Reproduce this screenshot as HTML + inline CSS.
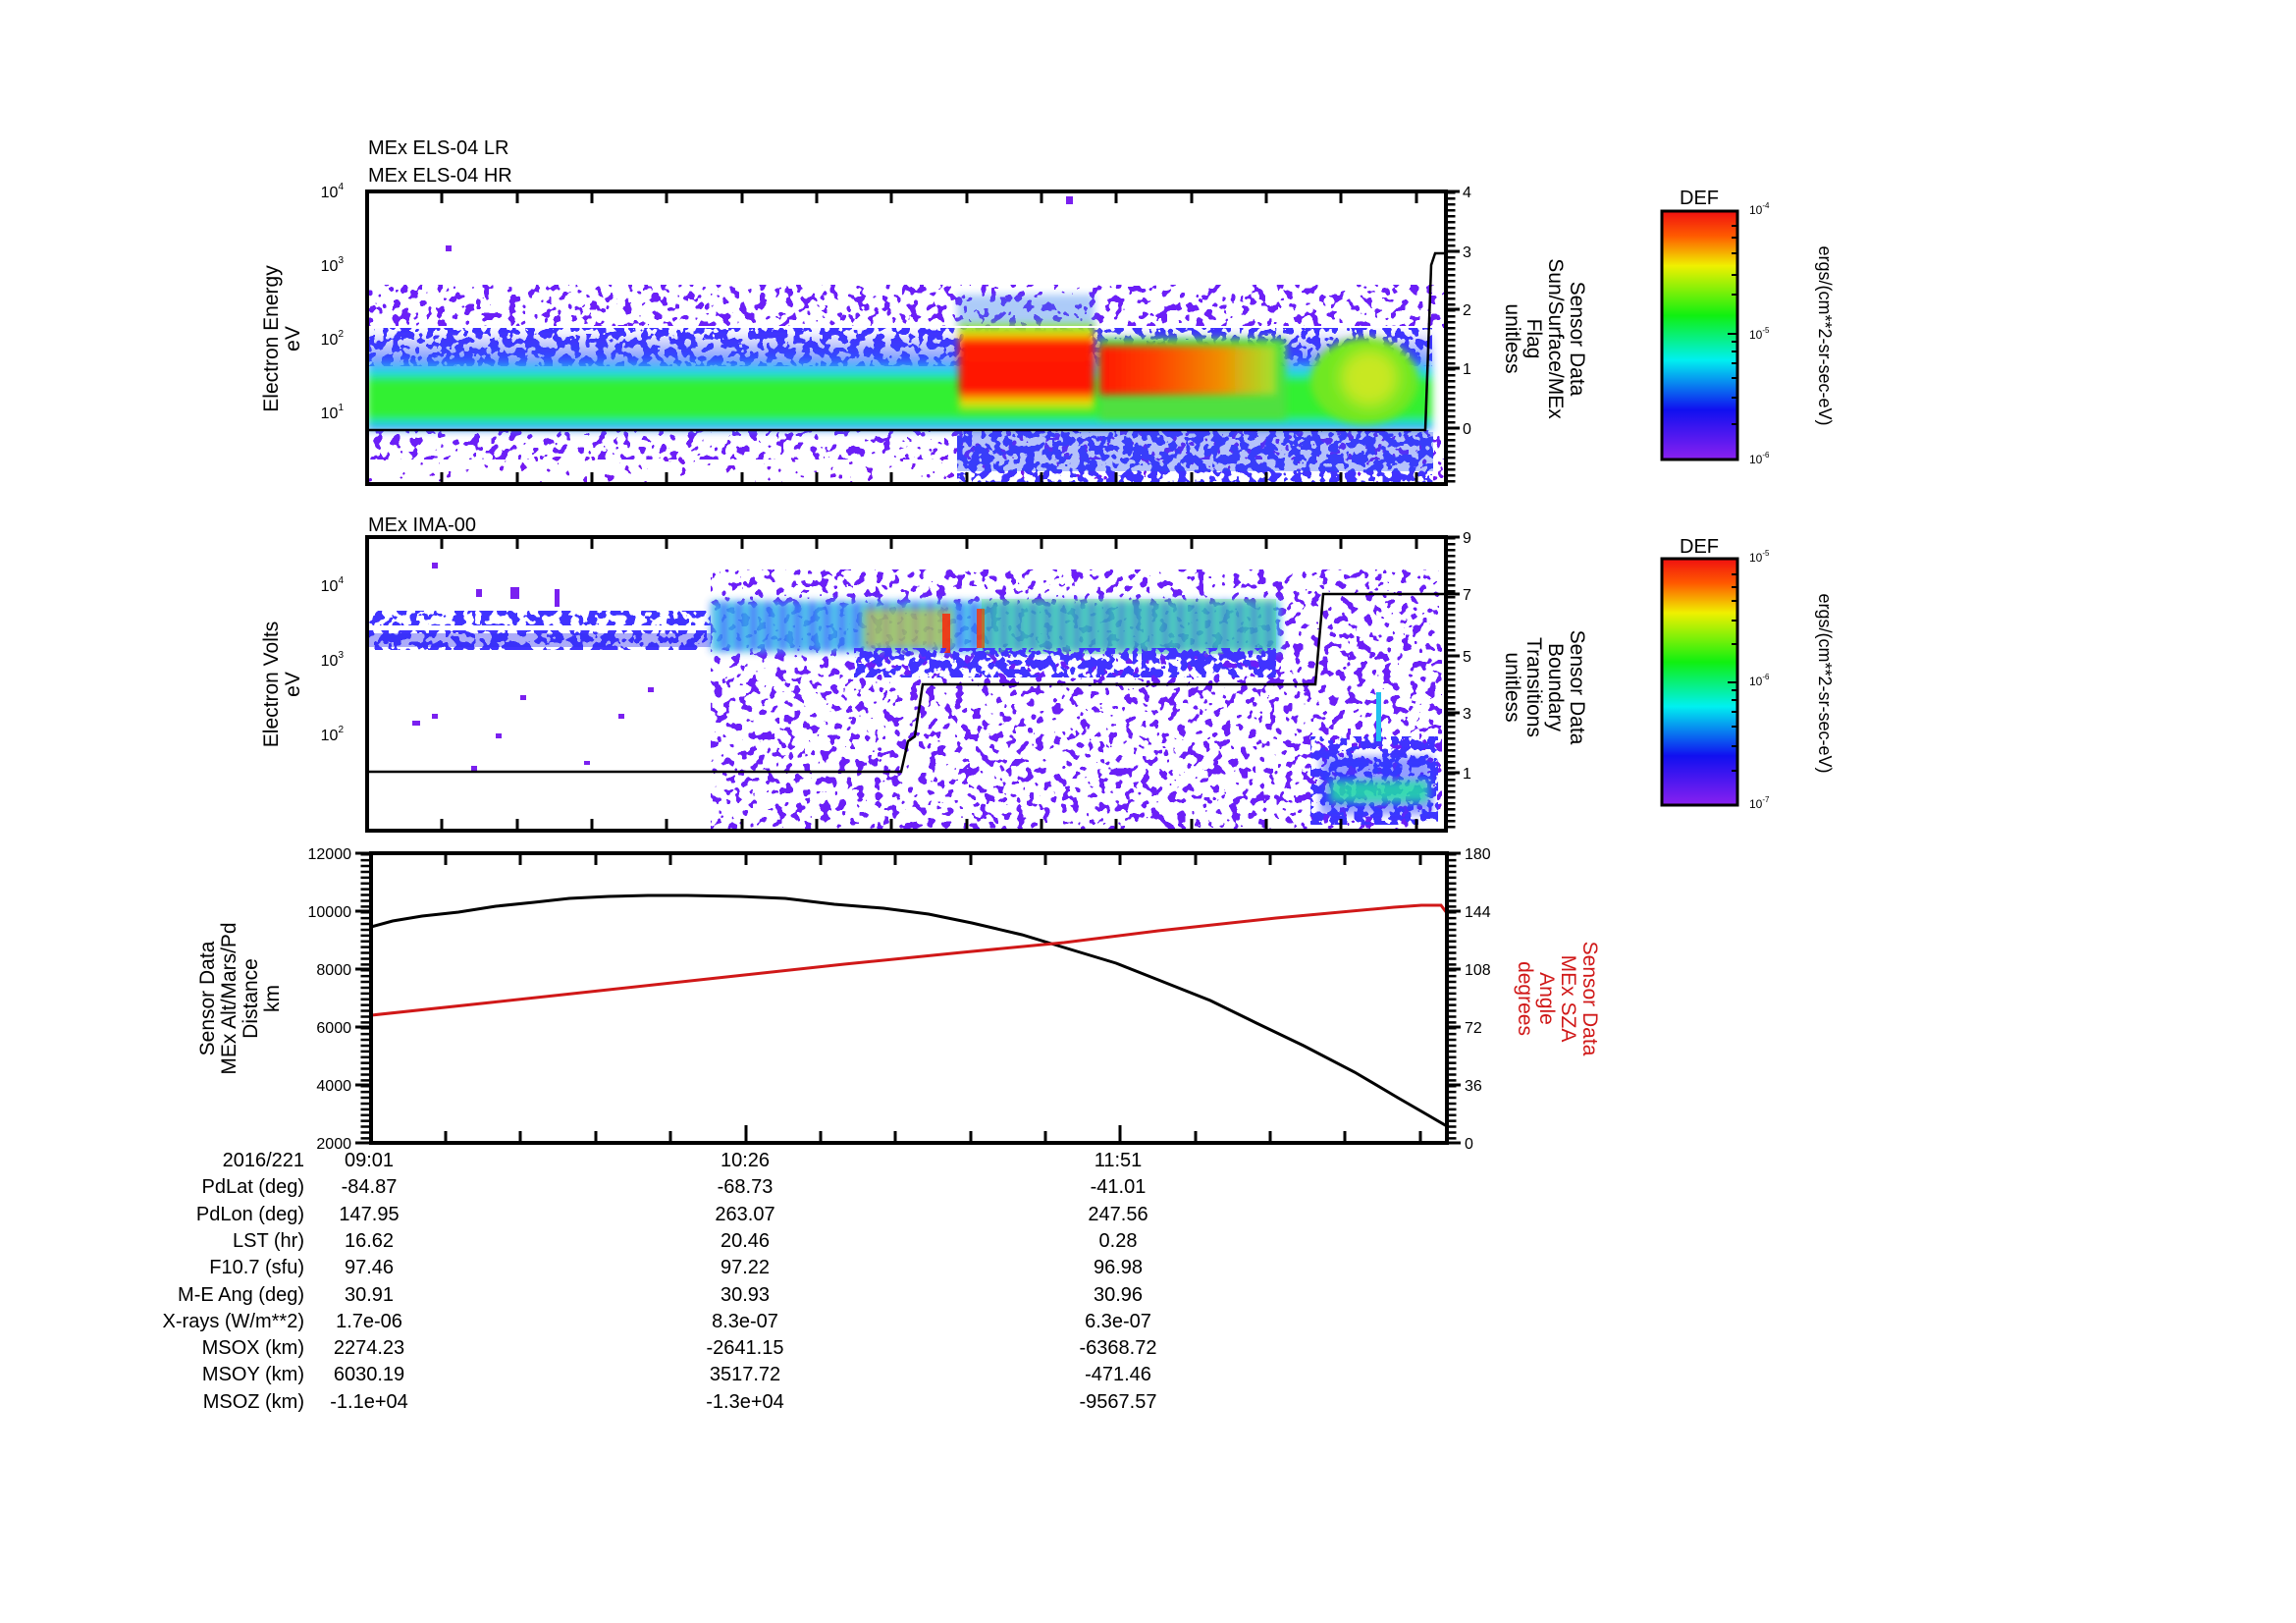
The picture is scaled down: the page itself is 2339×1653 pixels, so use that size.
<!DOCTYPE html>
<html><head><meta charset="utf-8"><style>
html,body{margin:0;padding:0;background:#fff;}
svg{display:block;font-family:"Liberation Sans",Arial,sans-serif;}
</style></head><body>
<svg width="2339" height="1653" viewBox="0 0 2339 1653" xmlns="http://www.w3.org/2000/svg">
<defs>
<filter id="spS" x="0" y="0" width="1" height="1" color-interpolation-filters="sRGB">
 <feTurbulence type="fractalNoise" baseFrequency="0.11 0.11" numOctaves="2" seed="4"/>
 <feColorMatrix type="matrix" values="0 0 0 0 0.45 0 0 0 0 0.1 0 0 0 0 0.95 1 0 0 0 0"/>
 <feComponentTransfer><feFuncA type="discrete" tableValues="0 0 0 0 0 0 0 1 1 1"/></feComponentTransfer>
</filter>
<filter id="spM" x="0" y="0" width="1" height="1" color-interpolation-filters="sRGB">
 <feTurbulence type="fractalNoise" baseFrequency="0.11 0.11" numOctaves="2" seed="9"/>
 <feColorMatrix type="matrix" values="0 0 0 0 0.42 0 0 0 0 0.12 0 0 0 0 0.97 1 0 0 0 0"/>
 <feComponentTransfer><feFuncA type="discrete" tableValues="0 0 0 0 0 0 1 1 1 1"/></feComponentTransfer>
</filter>
<filter id="spD" x="0" y="0" width="1" height="1" color-interpolation-filters="sRGB">
 <feTurbulence type="fractalNoise" baseFrequency="0.11 0.11" numOctaves="2" seed="13"/>
 <feColorMatrix type="matrix" values="0 0 0 0 0.25 0 0 0 0 0.2 0 0 0 0 1 1 0 0 0 0"/>
 <feComponentTransfer><feFuncA type="discrete" tableValues="0 0 0 0 0 1 1 1 1 1"/></feComponentTransfer>
</filter>
<filter id="bl" x="-10%" y="-20%" width="120%" height="140%"><feGaussianBlur stdDeviation="4"/></filter>
<filter id="bl2" x="-20%" y="-20%" width="140%" height="140%"><feGaussianBlur stdDeviation="8"/></filter>
<linearGradient id="band1" x1="0" y1="0" x2="0" y2="1">
 <stop offset="0" stop-color="#3030f0" stop-opacity="0"/><stop offset="0.3" stop-color="#2a60ff" stop-opacity="0.6"/>
 <stop offset="0.42" stop-color="#20d8f0"/><stop offset="0.52" stop-color="#30f030"/>
 <stop offset="0.85" stop-color="#30f030"/><stop offset="0.95" stop-color="#20d8f0"/>
 <stop offset="1" stop-color="#2040ff"/>
</linearGradient>
<linearGradient id="redv" x1="0" y1="0" x2="0" y2="1">
 <stop offset="0" stop-color="#40e040"/><stop offset="0.12" stop-color="#f0e000"/>
 <stop offset="0.2" stop-color="#ff2000"/><stop offset="0.75" stop-color="#ff1000"/>
 <stop offset="0.88" stop-color="#f0e000"/><stop offset="1" stop-color="#50e830"/>
</linearGradient>
<linearGradient id="orh" x1="0" y1="0" x2="1" y2="0">
 <stop offset="0" stop-color="#ff1800"/><stop offset="0.3" stop-color="#ff4000"/>
 <stop offset="0.7" stop-color="#f09000"/><stop offset="1" stop-color="#d8e020" stop-opacity="0.6"/>
</linearGradient>
<linearGradient id="cb" x1="0" y1="0" x2="0" y2="1">
 <stop offset="0" stop-color="#f01010"/><stop offset="0.1" stop-color="#ff5a00"/>
 <stop offset="0.22" stop-color="#f0f000"/><stop offset="0.42" stop-color="#10f010"/>
 <stop offset="0.6" stop-color="#00f0f0"/><stop offset="0.8" stop-color="#1010f0"/>
 <stop offset="1" stop-color="#8a20f0"/>
</linearGradient>
<pattern id="stripe" x="724" y="0" width="15" height="10" patternUnits="userSpaceOnUse">
 <rect width="15" height="10" fill="#3050ff"/><rect x="3" width="6" height="10" fill="#30d8d8"/>
</pattern>
<clipPath id="c1"><rect x="374" y="195" width="1099" height="298"/></clipPath>
<clipPath id="c2"><rect x="374" y="547" width="1099" height="299"/></clipPath>
<clipPath id="cl1"><rect x="350" y="195" width="30" height="299"/></clipPath>
<clipPath id="cl2"><rect x="350" y="547" width="30" height="300"/></clipPath>
<g id="dec"><path d="M0 0h-12 M0 -17h-7 M0 -27h-7 M0 -34h-7 M0 -39.5h-7 M0 -44h-7 M0 -48h-7 M0 -51h-7 M0 -54h-7" stroke="#000" stroke-width="3"/></g>
</defs>
<rect width="2339" height="1653" fill="#fff"/>

<g font-size="20" fill="#000">
<text x="375" y="157">MEx ELS-04 LR</text>
<text x="375" y="185">MEx ELS-04 HR</text>
<text x="375" y="541">MEx IMA-00</text>
</g>

<!-- PANEL 1 -->
<g clip-path="url(#c1)">
 <rect x="374" y="290" width="1099" height="44" filter="url(#spM)"/>
 <rect x="374" y="438" width="1099" height="30" filter="url(#spM)"/>
 <rect x="374" y="465" width="1099" height="28" filter="url(#spS)"/>
 <rect x="374" y="333" width="1085" height="40" filter="url(#spD)"/>
 <rect x="374" y="336" width="1085" height="102" fill="url(#band1)" filter="url(#bl)"/>
 <rect x="975" y="438" width="485" height="55" filter="url(#spD)"/>
 <rect x="975" y="440" width="485" height="40" fill="#2a50f0" opacity="0.35"/>
 <rect x="975" y="300" width="140" height="33" fill="#3080f0" opacity="0.4" filter="url(#bl)"/>
 <rect x="977" y="330" width="138" height="90" fill="url(#redv)" filter="url(#bl)"/>
 <rect x="1120" y="345" width="190" height="82" fill="#50e040" filter="url(#bl)"/>
 <rect x="1120" y="352" width="180" height="50" fill="url(#orh)" filter="url(#bl)"/>
 <ellipse cx="1390" cy="388" rx="55" ry="44" fill="#70e820" filter="url(#bl)"/>
 <ellipse cx="1395" cy="385" rx="30" ry="30" fill="#c8e820" filter="url(#bl2)"/>
 <rect x="1086" y="200" width="7" height="8" fill="#7a20f0"/>
 <rect x="454" y="250" width="6" height="6" fill="#7a20f0"/>
 <line x1="374" y1="333" x2="1460" y2="333" stroke="#fff" stroke-width="2"/>
 <polyline points="374,438 1452,438 1458,270 1462,258 1473,258" fill="none" stroke="#000" stroke-width="2.5"/>
</g>
<rect x="374" y="195" width="1099" height="298" fill="none" stroke="#000" stroke-width="4"/>

<!-- PANEL 2 -->
<g clip-path="url(#c2)">
 <rect x="724" y="580" width="745" height="266" filter="url(#spM)"/>
 <rect x="724" y="800" width="745" height="46" filter="url(#spM)"/>
 <rect x="374" y="622" width="350" height="15" filter="url(#spD)"/>
 <rect x="374" y="642" width="350" height="20" filter="url(#spD)"/>
 <rect x="374" y="645" width="350" height="14" fill="#3030f0" opacity="0.4"/>
 <rect x="724" y="612" width="580" height="52" fill="url(#stripe)" opacity="0.85" filter="url(#bl)"/>
 <rect x="880" y="620" width="90" height="40" fill="#f0d000" opacity="0.5" filter="url(#bl)"/>
 <rect x="960" y="625" width="8" height="40" fill="#ff2000" opacity="0.8"/>
 <rect x="995" y="620" width="8" height="40" fill="#ff3000" opacity="0.8"/>
 <rect x="1000" y="610" width="300" height="56" fill="#40e840" opacity="0.25"/>
 <rect x="870" y="660" width="430" height="30" filter="url(#spD)"/>
 <rect x="1335" y="750" width="130" height="90" filter="url(#spD)"/>
 <rect x="1345" y="770" width="115" height="60" fill="#2a40ff" opacity="0.5" filter="url(#bl)"/>
 <rect x="1355" y="795" width="100" height="22" fill="#20e8a0" opacity="0.8" filter="url(#bl)"/>
 <rect x="1402" y="705" width="5" height="50" fill="#20c0f0"/>
 <g fill="#7a20f0">
  <rect x="440" y="573" width="6" height="6"/><rect x="485" y="600" width="6" height="8"/>
  <rect x="520" y="598" width="9" height="12"/><rect x="565" y="600" width="5" height="18"/>
  <rect x="420" y="734" width="8" height="5"/><rect x="440" y="727" width="6" height="5"/>
  <rect x="505" y="747" width="6" height="5"/><rect x="530" y="708" width="6" height="5"/>
  <rect x="660" y="700" width="6" height="5"/><rect x="630" y="727" width="6" height="5"/>
  <rect x="480" y="780" width="6" height="5"/><rect x="595" y="775" width="6" height="4"/>
 </g>
 <polyline points="374,786 918,786 925,755 932,750 940,697 1340,697 1348,605 1473,605" fill="none" stroke="#000" stroke-width="2.5"/>
</g>
<rect x="374" y="547" width="1099" height="299" fill="none" stroke="#000" stroke-width="4"/>

<!-- PANEL 3 -->
<polyline points="378,944 400,938 430,933 467,929 505,923 544,919 580,915 620,913 660,912 700,912 754,913 800,915 850,921 900,925 946,931 990,940 1041,952 1084,965 1137,981 1180,998 1233,1019 1280,1042 1328,1065 1380,1092 1424,1118 1450,1133 1474,1147" fill="none" stroke="#000" stroke-width="3"/>
<polyline points="378,1034 500,1021 620,1008 740,995 860,982 980,970 1084,960 1180,948 1300,935 1420,924 1448,922 1468,922 1474,930" fill="none" stroke="#d01818" stroke-width="3"/>
<rect x="378" y="869" width="1096" height="295" fill="none" stroke="#000" stroke-width="4"/>

<g stroke="#000" stroke-width="3">
<path d="M450 195v12M527 195v12M603 195v12M679 195v12M756 195v12M832 195v12M908 195v12M985 195v12M1061 195v12M1137 195v12M1214 195v12M1290 195v12M1366 195v12M1443 195v12
M450 493v-12M527 493v-12M603 493v-12M679 493v-12M756 493v-12M832 493v-12M908 493v-12M985 493v-12M1061 493v-12M1137 493v-12M1214 493v-12M1290 493v-12M1366 493v-12M1443 493v-12"/>
<path d="M450 547v12M527 547v12M603 547v12M679 547v12M756 547v12M832 547v12M908 547v12M985 547v12M1061 547v12M1137 547v12M1214 547v12M1290 547v12M1366 547v12M1443 547v12
M450 846v-12M527 846v-12M603 846v-12M679 846v-12M756 846v-12M832 846v-12M908 846v-12M985 846v-12M1061 846v-12M1137 846v-12M1214 846v-12M1290 846v-12M1366 846v-12M1443 846v-12"/>
<path d="M454 869v12M530 869v12M607 869v12M683 869v12M760 869v12M836 869v12M912 869v12M989 869v12M1065 869v12M1141 869v12M1218 869v12M1294 869v12M1370 869v12M1447 869v12
M454 1164v-12M530 1164v-12M607 1164v-12M683 1164v-12M760 1164v-18M836 1164v-12M912 1164v-12M989 1164v-12M1065 1164v-12M1141 1164v-18M1218 1164v-12M1294 1164v-12M1370 1164v-12M1447 1164v-12"/>
</g>

<g clip-path="url(#cl1)" transform="translate(374,0)">
 <use href="#dec" y="495"/><use href="#dec" y="420"/><use href="#dec" y="345"/><use href="#dec" y="270"/><use href="#dec" y="195"/>
</g>
<g clip-path="url(#cl2)" transform="translate(374,0)">
 <use href="#dec" y="900"/><use href="#dec" y="824"/><use href="#dec" y="748"/><use href="#dec" y="672"/><use href="#dec" y="596"/><use href="#dec" y="520"/>
</g>
<line x1="372" y1="869" x2="372" y2="1164" stroke="#000" stroke-width="9" stroke-dasharray="2.5 3.4"/>
<path d="M378 869h-16M378 928h-16M378 987h-16M378 1046h-16M378 1105h-16M378 1164h-16" stroke="#000" stroke-width="3"/>
<line x1="1478" y1="195" x2="1478" y2="493" stroke="#000" stroke-width="9" stroke-dasharray="2.5 3.5"/>
<path d="M1473 195h14M1473 256h14M1473 315h14M1473 375h14M1473 436h14" stroke="#000" stroke-width="3"/>
<line x1="1478" y1="547" x2="1478" y2="846" stroke="#000" stroke-width="9" stroke-dasharray="2.5 3.5"/>
<path d="M1473 547h14M1473 605h14M1473 668h14M1473 726h14M1473 787h14" stroke="#000" stroke-width="3"/>
<line x1="1479" y1="869" x2="1479" y2="1164" stroke="#000" stroke-width="9" stroke-dasharray="2.5 3.4"/>
<path d="M1474 869h14M1474 928h14M1474 987h14M1474 1046h14M1474 1105h14M1474 1164h14" stroke="#000" stroke-width="3"/>

<g font-size="16" fill="#000" text-anchor="end">
 <text x="350" y="201">10<tspan font-size="10" dy="-8">4</tspan></text>
 <text x="350" y="276">10<tspan font-size="10" dy="-8">3</tspan></text>
 <text x="350" y="351">10<tspan font-size="10" dy="-8">2</tspan></text>
 <text x="350" y="426">10<tspan font-size="10" dy="-8">1</tspan></text>
 <text x="350" y="602">10<tspan font-size="10" dy="-8">4</tspan></text>
 <text x="350" y="678">10<tspan font-size="10" dy="-8">3</tspan></text>
 <text x="350" y="754">10<tspan font-size="10" dy="-8">2</tspan></text>
 <text x="358" y="875">12000</text><text x="358" y="934">10000</text><text x="358" y="993">8000</text>
 <text x="358" y="1052">6000</text><text x="358" y="1111">4000</text><text x="358" y="1170">2000</text>
</g>
<g font-size="16" fill="#000">
 <text x="1490" y="201">4</text><text x="1490" y="262">3</text><text x="1490" y="321">2</text><text x="1490" y="381">1</text><text x="1490" y="442">0</text>
 <text x="1490" y="553">9</text><text x="1490" y="611">7</text><text x="1490" y="674">5</text><text x="1490" y="732">3</text><text x="1490" y="793">1</text>
 <text x="1492" y="875">180</text><text x="1492" y="934">144</text><text x="1492" y="993">108</text><text x="1492" y="1052">72</text><text x="1492" y="1111">36</text><text x="1492" y="1170">0</text>
</g>

<g font-size="21" fill="#000" text-anchor="middle">
 <g transform="translate(283,345) rotate(-90)"><text y="0">Electron Energy</text><text y="22">eV</text></g>
 <g transform="translate(283,697) rotate(-90)"><text y="0">Electron Volts</text><text y="22">eV</text></g>
 <g transform="translate(218,1017) rotate(-90)"><text y="0">Sensor Data</text><text y="22">MEx Alt/Mars/Pd</text><text y="44">Distance</text><text y="66">km</text></g>
 <g transform="translate(1600,345) rotate(90)"><text y="0">Sensor Data</text><text y="22">Sun/Surface/MEx</text><text y="44">Flag</text><text y="66">unitless</text></g>
 <g transform="translate(1600,700) rotate(90)"><text y="0">Sensor Data</text><text y="22">Boundary</text><text y="44">Transitions</text><text y="66">unitless</text></g>
 <g transform="translate(1613,1017) rotate(90)" fill="#d01818"><text y="0">Sensor Data</text><text y="22">MEx SZA</text><text y="44">Angle</text><text y="66">degrees</text></g>
</g>

<g>
 <rect x="1693" y="215" width="77" height="253" fill="url(#cb)" stroke="#000" stroke-width="3"/>
 <rect x="1693" y="569" width="77" height="251" fill="url(#cb)" stroke="#000" stroke-width="3"/>
 <g stroke="#000" stroke-width="2">
  <path d="M1770 230h-6M1770 242h-6M1770 258h-6M1770 280h-6M1770 300h-6M1770 340h-10M1770 348h-6M1770 358h-6M1770 370h-6M1770 385h-6M1770 405h-6M1770 432h-6"/>
  <path d="M1770 585h-6M1770 598h-6M1770 612h-6M1770 632h-6M1770 656h-6M1770 695h-10M1770 703h-6M1770 713h-6M1770 725h-6M1770 740h-6M1770 760h-6M1770 785h-6"/>
 </g>
 <g font-size="20" text-anchor="middle"><text x="1731" y="208">DEF</text><text x="1731" y="563">DEF</text></g>
 <g font-size="12">
  <text x="1782" y="218">10<tspan font-size="8" dy="-6">-4</tspan></text>
  <text x="1782" y="345">10<tspan font-size="8" dy="-6">-5</tspan></text>
  <text x="1782" y="472">10<tspan font-size="8" dy="-6">-6</tspan></text>
  <text x="1782" y="572">10<tspan font-size="8" dy="-6">-5</tspan></text>
  <text x="1782" y="698">10<tspan font-size="8" dy="-6">-6</tspan></text>
  <text x="1782" y="823">10<tspan font-size="8" dy="-6">-7</tspan></text>
 </g>
 <g font-size="18" text-anchor="middle">
  <text transform="translate(1853,342) rotate(90)">ergs/(cm**2-sr-sec-eV)</text>
  <text transform="translate(1853,696) rotate(90)">ergs/(cm**2-sr-sec-eV)</text>
 </g>
</g>

<g font-size="20" fill="#000">
 <g text-anchor="end">
  <text x="310" y="1188">2016/221</text><text x="310" y="1215">PdLat (deg)</text><text x="310" y="1243">PdLon (deg)</text>
  <text x="310" y="1270">LST (hr)</text><text x="310" y="1297">F10.7 (sfu)</text><text x="310" y="1325">M-E Ang (deg)</text>
  <text x="310" y="1352">X-rays (W/m**2)</text><text x="310" y="1379">MSOX (km)</text><text x="310" y="1406">MSOY (km)</text><text x="310" y="1434">MSOZ (km)</text>
 </g>
 <g text-anchor="middle">
  <text x="376" y="1188">09:01</text><text x="376" y="1215">-84.87</text><text x="376" y="1243">147.95</text><text x="376" y="1270">16.62</text>
  <text x="376" y="1297">97.46</text><text x="376" y="1325">30.91</text><text x="376" y="1352">1.7e-06</text><text x="376" y="1379">2274.23</text>
  <text x="376" y="1406">6030.19</text><text x="376" y="1434">-1.1e+04</text>
  <text x="759" y="1188">10:26</text><text x="759" y="1215">-68.73</text><text x="759" y="1243">263.07</text><text x="759" y="1270">20.46</text>
  <text x="759" y="1297">97.22</text><text x="759" y="1325">30.93</text><text x="759" y="1352">8.3e-07</text><text x="759" y="1379">-2641.15</text>
  <text x="759" y="1406">3517.72</text><text x="759" y="1434">-1.3e+04</text>
  <text x="1139" y="1188">11:51</text><text x="1139" y="1215">-41.01</text><text x="1139" y="1243">247.56</text><text x="1139" y="1270">0.28</text>
  <text x="1139" y="1297">96.98</text><text x="1139" y="1325">30.96</text><text x="1139" y="1352">6.3e-07</text><text x="1139" y="1379">-6368.72</text>
  <text x="1139" y="1406">-471.46</text><text x="1139" y="1434">-9567.57</text>
 </g>
</g>
</svg>
</body></html>
